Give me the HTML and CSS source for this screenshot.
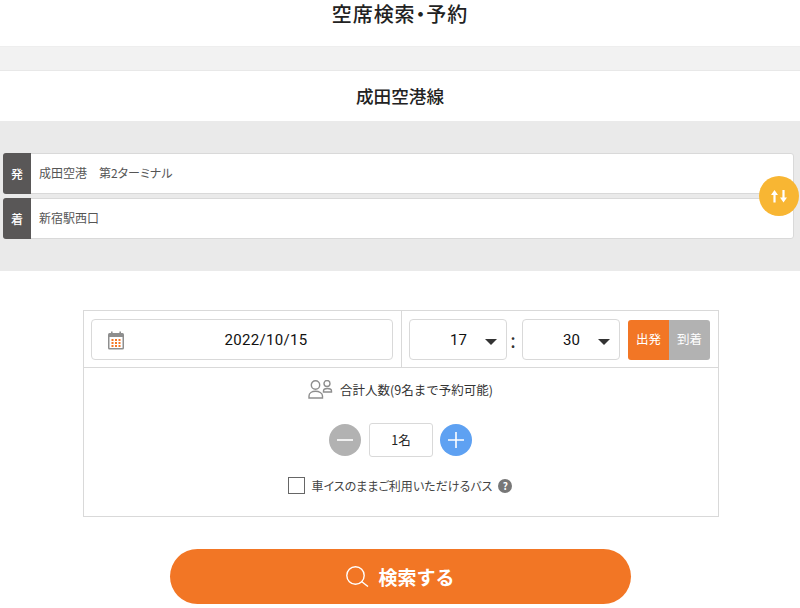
FILE: index.html
```html
<!DOCTYPE html>
<html lang="ja">
<head>
<meta charset="utf-8">
<title>空席検索・予約</title>
<link rel="stylesheet" href="styles.css">
</head>
<body>
<header class="page-head"><h1 class="page-title">空席検索・予約</h1></header>
<div class="spacer-band"></div>
<h2 class="route-title">成田空港線</h2>
<section class="stops">
  <div class="stop-row">
    <span class="stop-tag">発</span>
    <span class="stop-name">成田空港　第2ターミナル</span>
  </div>
  <div class="stop-row">
    <span class="stop-tag">着</span>
    <span class="stop-name">新宿駅西口</span>
  </div>
  <button class="swap" aria-label="入替">
    <svg width="16" height="13" viewBox="0 0 16 13"><path d="M3.5 0 L7 5 H4.6 V12.5 H2.4 V5 H0 Z M12.5 12.5 L9 7.5 H11.4 V0 H13.6 V7.5 H16 Z" fill="#fff"/></svg>
  </button>
</section>
<section class="panel">
  <div class="panel-top">
    <div class="date-cell">
      <div class="date-box">
        <svg class="cal" width="18" height="19" viewBox="0 0 18 19"><rect x="1" y="2" width="16" height="16.5" rx="1.5" fill="#8e8e8e"/><rect x="2.5" y="6" width="13" height="11" fill="#fff"/><rect x="4" y="0.5" width="1.6" height="3.5" fill="#8e8e8e"/><rect x="12.4" y="0.5" width="1.6" height="3.5" fill="#8e8e8e"/><g fill="#f47725"><rect x="4.5" y="8" width="2" height="2"/><rect x="8" y="8" width="2" height="2"/><rect x="11.5" y="8" width="2" height="2"/><rect x="4.5" y="11" width="2" height="2"/><rect x="8" y="11" width="2" height="2"/><rect x="11.5" y="11" width="2" height="2"/><rect x="4.5" y="14" width="2" height="2"/><rect x="8" y="14" width="2" height="2"/><rect x="11.5" y="14" width="2" height="2"/></g></svg>
        <span class="date-text">2022/10/15</span>
      </div>
    </div>
    <div class="time-cell">
      <div class="time-box"><span class="time-val">17</span><i class="caret"></i></div>
      <span class="colon">:</span>
      <div class="time-box"><span class="time-val">30</span><i class="caret"></i></div>
      <div class="toggle"><span class="toggle-on">出発</span><span class="toggle-off">到着</span></div>
    </div>
  </div>
  <div class="count-label">
    <svg width="25" height="19" viewBox="0 0 25 19" fill="none" stroke="#8e8e8e" stroke-width="1.4"><circle cx="7.5" cy="5" r="4.2"/><path d="M1 18 V16 C1 13 4 11.3 7.5 11.3 C11 11.3 14.5 13 14.5 16 V18 Z"/><circle cx="19" cy="3.5" r="3"/><path d="M15.5 12 V11 C15.5 9.5 17 8.5 19.3 8.5 C21.5 8.5 23.5 9.5 23.5 11 V12 Z"/></svg>
    <span>合計人数(9名まで予約可能)</span>
  </div>
  <div class="stepper">
    <span class="round minus"><svg width="16" height="16" viewBox="0 0 16 16"><rect x="0" y="7.2" width="16" height="1.6" fill="#fff"/></svg></span>
    <span class="count">1名</span>
    <span class="round plus"><svg width="16" height="16" viewBox="0 0 16 16"><path d="M0 7.2 H7.2 V0 H8.8 V7.2 H16 V8.8 H8.8 V16 H7.2 V8.8 H0 Z" fill="#fff"/></svg></span>
  </div>
  <div class="wheel">
    <span class="check"></span>
    <span class="wheel-text">車イスのままご利用いただけるバス</span>
    <span class="help">?</span>
  </div>
</section>
<div class="action">
  <button class="search">
    <svg width="23" height="21" viewBox="0 0 23 21" fill="none" stroke="#fff" stroke-width="1.4"><circle cx="9.5" cy="9.5" r="8.7"/><path d="M15.5 15.5 L22 20.5"/></svg>
    <span>検索する</span>
  </button>
</div>
</body>
</html>
```
FILE: styles.css
```css
* { box-sizing: border-box; }
html, body { margin: 0; padding: 0; background: #fff; }
body {
  width: 800px;
  height: 608px;
  overflow: hidden;
  font-family: "Noto Sans CJK JP", "Noto Sans", sans-serif;
  color: #222;
}
.page-head { height: 46px; }
.page-title {
  margin: 0;
  font-size: 20px;
  line-height: 28px;
  font-weight: 500;
  text-align: center;
  letter-spacing: 0.9px;
  font-feature-settings: "palt";
  color: #222;
}
.spacer-band {
  height: 25px;
  background: #f2f2f2;
  border-top: 1px solid #eee;
  border-bottom: 1px solid #e8e8e8;
}
.route-title {
  margin: 0;
  height: 50px;
  font-size: 17.6px;
  line-height: 50px;
  font-weight: 500;
  text-align: center;
  color: #222;
}
.stops {
  position: relative;
  height: 150px;
  padding: 32px 6px 0 3px;
  background: #eaeaea;
  display: flex;
  flex-direction: column;
  gap: 4px;
}
.stop-row {
  display: flex;
  height: 41px;
  background: #fff;
  border: 1px solid #d9d9d9;
  border-top-width: 1.5px;
  border-radius: 3px;
}
.stop-tag {
  width: 28px;
  margin: -1px 0 -1px -1px;
  flex: none;
  background: #595757;
  color: #fff;
  border-radius: 3px 0 0 3px;
  font-size: 12px;
  font-weight: 500;
  display: flex;
  align-items: center;
  justify-content: center;
}
.stop-name {
  padding-left: 8px;
  font-size: 12px;
  line-height: 38px;
  font-feature-settings: "palt";
  color: #555;
}
.swap {
  position: absolute;
  left: 759px;
  top: 55px;
  width: 40px;
  height: 40px;
  padding: 0;
  border: 0;
  border-radius: 50%;
  background: #f8b633;
  display: flex;
  align-items: center;
  justify-content: center;
}
.panel {
  width: 636px;
  height: 207px;
  margin: 39px 0 0 83px;
  border: 1px solid #d9d9d9;
}
.panel-top {
  display: flex;
  height: 57px;
  border-bottom: 1px solid #d9d9d9;
}
.date-cell {
  width: 318px;
  padding: 8px 8px 0 7px;
  border-right: 1px solid #d9d9d9;
}
.date-box {
  position: relative;
  height: 41px;
  padding-left: 48px;
  border: 1px solid #d9d9d9;
  border-radius: 4px;
  display: flex;
  align-items: center;
  justify-content: center;
}
.cal { position: absolute; left: 15px; top: 11px; }
.date-text {
  font-family: Roboto, sans-serif;
  font-size: 15px;
  font-weight: 400;
  letter-spacing: 0.3px;
  color: #111;
}
.time-cell {
  flex: 1;
  display: flex;
  align-items: flex-start;
  padding: 8px 0 0 7px;
}
.time-box {
  position: relative;
  width: 98px;
  height: 41px;
  border: 1px solid #d9d9d9;
  border-radius: 4px;
  display: flex;
  align-items: center;
  padding-left: 40px;
  font-family: Roboto, sans-serif;
  font-size: 15px;
  font-weight: 400;
  color: #111;
}
.caret {
  position: absolute;
  right: 9px;
  top: 19px;
  border-style: solid;
  border-width: 6px 6px 0;
  border-color: #333 transparent transparent;
}
.colon {
  width: 15px;
  padding-right: 3px;
  text-align: center;
  font-size: 20px;
  font-weight: 400;
  line-height: 41px;
  color: #333;
}
.toggle {
  display: flex;
  width: 82px;
  height: 40px;
  margin: 1px 0 0 8px;
  border-radius: 3px;
  overflow: hidden;
  font-size: 12.5px;
  line-height: 38px;
  color: #fff;
  text-align: center;
}
.toggle-on { flex: 1; background: #f27625; }
.toggle-off { flex: 1; background: #b2b2b2; }
.count-label {
  display: flex;
  align-items: center;
  justify-content: center;
  gap: 7px;
  margin-top: 10px;
  height: 22px;
  font-size: 12.5px;
  color: #333;
  padding-right: 1px;
}
.stepper {
  display: flex;
  justify-content: center;
  align-items: center;
  gap: 8px;
  margin-top: 23px;
  padding-right: 1px;
}
.round {
  width: 32px;
  height: 32px;
  border-radius: 50%;
  display: flex;
  align-items: center;
  justify-content: center;
}
.minus { background: #b2b2b2; }
.plus { background: #5ea1f2; margin-left: -1px; }
.count {
  width: 64px;
  height: 34px;
  border: 1px solid #d9d9d9;
  border-radius: 3px;
  font-size: 12.5px;
  line-height: 32px;
  text-align: center;
  color: #222;
}
.wheel {
  display: flex;
  align-items: center;
  justify-content: center;
  margin-top: 20px;
  font-size: 12px;
  font-feature-settings: "palt";
  color: #444;
  padding-right: 2px;
}
.check {
  width: 17px;
  height: 17px;
  border: 1.5px solid #666;
  margin-right: 7px;
}
.wheel-text { margin-right: 6px; }
.help {
  width: 14px;
  height: 14px;
  border-radius: 50%;
  background: #777;
  color: #fff;
  font-size: 10px;
  font-weight: 700;
  line-height: 14px;
  text-align: center;
}
.action { display: flex; justify-content: center; margin-top: 32px; padding-left: 1px; }
.search {
  width: 461px;
  height: 55px;
  border: 0;
  border-radius: 28px;
  background: #f27625;
  color: #fff;
  font-family: inherit;
  font-size: 19px;
  font-weight: 700;
  display: flex;
  align-items: center;
  justify-content: center;
  gap: 9px;
}
```
